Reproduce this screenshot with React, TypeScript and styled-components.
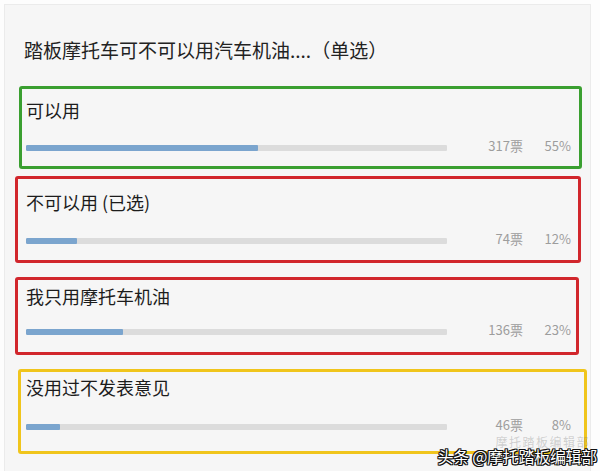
import React from 'react';
import styled, { createGlobalStyle } from 'styled-components';

const GlobalStyle = createGlobalStyle`
  html, body {
    margin: 0;
    padding: 0;
    background: #fdfdfd;
  }
  body {
    font-family: "Noto Sans CJK SC", "Noto Sans", sans-serif;
  }
`;

const Page = styled.div`
  position: relative;
  width: 600px;
  height: 471px;
  overflow: hidden;
  padding: 4px 9px 0 4px;
  box-sizing: border-box;
`;

const Panel = styled.div`
  background: #f6f6f6;
  border: 1px solid #ebebeb;
  border-bottom: none;
  height: 100%;
  box-sizing: border-box;
  padding-top: 32px;
`;

const Title = styled.div`
  font-size: 19px;
  line-height: 26px;
  color: #222;
  padding-left: 19px;
  margin-bottom: 23px;
  white-space: nowrap;
`;

interface CardProps {
  $color: string;
  $ml: number;
  $mr: number;
  $mt: number;
  $pt: number;
  $pb: number;
  $pl: number;
}

const Card = styled.div<CardProps>`
  border: 3px solid ${(p) => p.$color};
  border-radius: 3px;
  margin: ${(p) => `${p.$mt}px ${p.$mr}px 0 ${p.$ml}px`};
  padding: ${(p) => `${p.$pt}px 0 ${p.$pb}px ${p.$pl}px`};
`;

const Label = styled.div<{ $gap: number }>`
  font-size: 18px;
  line-height: 24px;
  color: #1c1c1c;
  margin-bottom: ${(p) => p.$gap}px;
  white-space: nowrap;
`;

const StatRow = styled.div`
  display: flex;
  align-items: center;
  height: 16px;
  width: 545px;
`;

const Track = styled.div`
  width: 421px;
  height: 6px;
  background: #dcdcdc;
  border-radius: 1px;
  overflow: hidden;
`;

const Fill = styled.div`
  height: 100%;
  background: #7ba5ce;
  border-radius: 1px;
`;

const Votes = styled.span`
  width: 76px;
  text-align: right;
  font-size: 13px;
  line-height: 14px;
  color: #9d9d9d;
  margin-top: -5px;
`;

const Percent = styled(Votes)`
  width: 48px;
`;

const Watermark = styled.div`
  position: absolute;
  right: 3px;
  bottom: 6px;
  font-size: 16px;
  line-height: 18px;
  color: #fff;
  white-space: nowrap;
  letter-spacing: -0.3px;
  text-shadow: 1px 0 0 #111, -1px 0 0 #111, 0 1px 0 #111, 0 -1px 0 #111, 1px 1px 0 #111, -1px -1px 0 #111,
    1px -1px 0 #111, -1px 1px 0 #111;
`;

const Ghost = styled.div`
  position: absolute;
  right: 10px;
  bottom: 23px;
  font-size: 12px;
  line-height: 12px;
  color: rgba(110, 110, 110, 0.3);
  white-space: nowrap;
  letter-spacing: 1.5px;
`;

const options = [
  { label: '可以用', votes: 317, pct: 55, color: '#3a9f30', ml: 14, mr: 8, mt: 0, pt: 9, gap: 18, pb: 10, pl: 4 },
  { label: '不可以用 (已选)', votes: 74, pct: 12, color: '#d1262c', ml: 10, mr: 9, mt: 7, pt: 11, gap: 19, pb: 11, pl: 8 },
  { label: '我只用摩托车机油', votes: 136, pct: 23, color: '#d1262c', ml: 10, mr: 11, mt: 14, pt: 4, gap: 16, pb: 12, pl: 8 },
  { label: '没用过不发表意见', votes: 46, pct: 8, color: '#f0c51c', ml: 13, mr: 3, mt: 14, pt: 3, gap: 20, pb: 16, pl: 5 },
];

export default function App() {
  return (
    <>
      <GlobalStyle />
      <Page>
        <Panel>
          <Title>踏板摩托车可不可以用汽车机油....（单选）</Title>
          {options.map((o) => (
            <Card key={o.label} $color={o.color} $ml={o.ml} $mr={o.mr} $mt={o.mt} $pt={o.pt} $pb={o.pb} $pl={o.pl}>
              <Label $gap={o.gap}>{o.label}</Label>
              <StatRow>
                <Track>
                  <Fill style={{ width: `${o.pct}%` }} />
                </Track>
                <Votes>{o.votes}票</Votes>
                <Percent>{o.pct}%</Percent>
              </StatRow>
            </Card>
          ))}
        </Panel>
        <Ghost>摩托踏板编辑部</Ghost>
        <Watermark>头条 @摩托踏板编辑部</Watermark>
      </Page>
    </>
  );
}
